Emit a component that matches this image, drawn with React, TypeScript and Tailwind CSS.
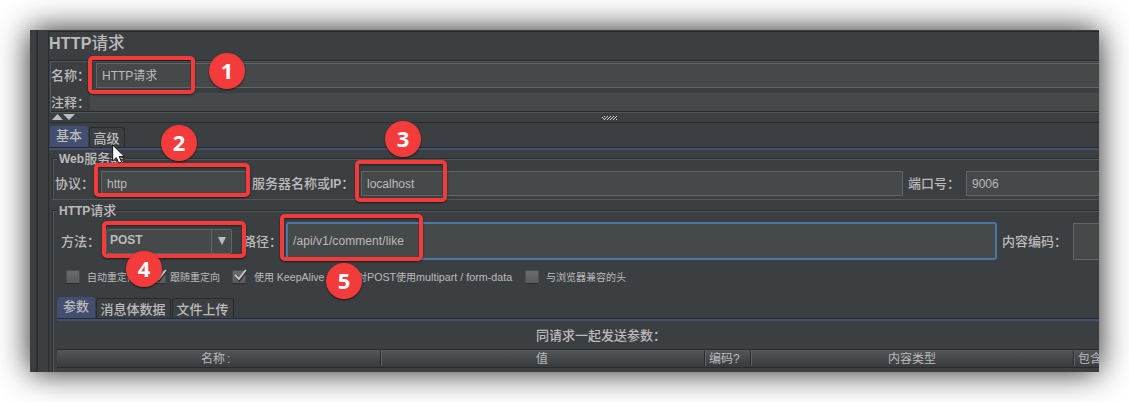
import type { ReactNode } from 'react';

const badges = [
  { n: 1, pos: 'left-[209px] top-[53px]' },
  { n: 2, pos: 'left-[161px] top-[125px]' },
  { n: 3, pos: 'left-[385px] top-[121px]' },
  { n: 4, pos: 'left-[126px] top-[251px]' },
  { n: 5, pos: 'left-[326px] top-[263px]' },
];

const frames = [
  'left-[88px] top-[56px] w-[107px] h-[38px]',
  'left-[94px] top-[163px] w-[156px] h-[34px]',
  'left-[355px] top-[160px] w-[92px] h-[42px]',
  'left-[102px] top-[221px] w-[144px] h-[37px]',
  'left-[280px] top-[214px] w-[143px] h-[47px]',
];

function Label({ children, className = '' }: { children: ReactNode; className?: string }) {
  return <span className={`shrink-0 text-[13px] font-medium leading-none ${className}`}>{children}</span>;
}

function Latin({ children }: { children: ReactNode }) {
  return <span className="text-[12px] font-bold">{children}</span>;
}

function Field({ children, className }: { children?: ReactNode; className: string }) {
  return (
    <div className={`flex shrink-0 items-center border border-[#646464] bg-[#45494a] text-[12px] leading-none ${className}`}>
      {children}
    </div>
  );
}

function Check({ on = false, className = '' }: { on?: boolean; className?: string }) {
  return (
    <span className={`flex h-[14px] w-[14px] shrink-0 rounded-[1px] border border-[#4b4c4d] border-b-[#2b2d2e] bg-linear-to-b from-[#6b6b6b] to-[#5b5b5b] ${className}`}>
      {on && (
        <svg viewBox="0 0 14 14" className="-mt-[2px] h-[14px] w-[14px] shrink-0 overflow-visible" fill="none">
          <path d="M2.8 6.8 L6.2 11 L13 2" stroke="#2a2a2a" strokeWidth="2.8" />
          <path d="M2 5.8 L5.8 10 L12.8 1" stroke="#c4c4c4" strokeWidth="2" />
        </svg>
      )}
    </span>
  );
}

function Group({ title, className, gap, children }: { title: ReactNode; className: string; gap: string; children: ReactNode }) {
  return (
    <section className={`relative ml-[3px] border-l border-t border-[#2b2d2f] ${className}`}>
      <div className="h-full border-l border-t border-[#55585a]">{children}</div>
      <div className={`absolute -top-[8px] left-[4px] flex h-[15px] items-center bg-[#3c3f41] pl-[2px] ${gap}`}>
        <Label>{title}</Label>
      </div>
    </section>
  );
}

function Tab({ active = false, children, className }: { active?: boolean; children: ReactNode; className: string }) {
  return (
    <div
      className={`flex shrink-0 items-center justify-center rounded-t-[3px] ${
        active ? 'bg-[#434f70] pb-[2px]' : 'border border-b-0 border-[#292b2d] bg-[#3c3f41] pr-px pt-px'
      } ${className}`}
    >
      <Label>{children}</Label>
    </div>
  );
}

function TabLine() {
  return <div className="h-[3px] shrink-0 border-t border-[#292b2d] bg-[#434f70]" />;
}

function HeadCell({ children, className }: { children: ReactNode; className: string }) {
  return (
    <div className="flex h-full items-center">
      <div className={`flex h-full items-center overflow-hidden whitespace-nowrap pt-px ${className}`}>{children}</div>
      <span className="h-[15px] w-[2px] border-l border-[#292b2d] bg-[#606365]" />
    </div>
  );
}

export default function App() {
  return (
    <div className="relative h-[402px] w-[1129px] overflow-hidden bg-white p-[30px] text-[#bbbbbb] [font-family:'Liberation_Sans','Noto_Sans_CJK_SC',sans-serif]">
      <div className="flex h-[342px] w-[1069px] overflow-hidden whitespace-nowrap bg-[#3c3f41] shadow-[0_0_30px_rgba(0,0,0,0.88)]">
        <div className="w-[6px] shrink-0" />
        <div className="w-[2px] shrink-0 bg-[#2b2d2f]" />
        <div className="w-[10px] shrink-0" />
        <main className="mt-px flex w-[1051px] shrink-0 flex-col border-l border-t border-[#292b2d]">
          <header className="flex h-[29px] shrink-0 items-center border-b border-[#292b2d] pb-[5px] text-[16px] leading-none">
            <span className="font-bold tracking-[0.2px]">HTTP</span>
            <span className="text-[16.5px] font-medium">请求</span>
          </header>

          <div className="ml-px h-[52px] shrink-0 border-b border-l border-t border-[#55585a]">
            <div className="flex h-[50px] flex-col border-b border-[#292b2d] pt-px">
              <div className="flex h-[25px] items-center">
                <Label className="w-[45px]">名称：</Label>
                <Field className="h-[25px] w-[1010px] pl-[5px]">HTTP请求</Field>
              </div>
              <div className="mt-[5px] flex h-[18px] items-center">
                <Label className="w-[39px]">注释：</Label>
                <div className="h-[18px] flex-1 bg-[#45494a]" />
              </div>
            </div>
          </div>

          <div className="flex h-[9px] shrink-0 items-start pl-[3px] pt-px">
            <svg width="24" height="6" viewBox="0 0 24 6" fill="#bbbbbb">
              <path d="M0 6 L5.5 0 L11 6Z M11 0 H23 L17 6Z" />
            </svg>
            <svg width="16" height="4" viewBox="0 0 16 4" className="ml-[526px] mt-[2px]" fill="#d8d8d8" shapeRendering="crispEdges">
              <path d="M2 0h1v1h-1zM5 0h1v1h-1zM8 0h1v1h-1zM11 0h1v1h-1zM14 0h1v1h-1z M0 1h1v1h-1zM4 1h1v1h-1zM7 1h1v1h-1zM10 1h1v1h-1zM13 1h1v1h-1z M1 2h1v1h-1zM3 2h1v1h-1zM6 2h1v1h-1zM9 2h1v1h-1zM12 2h1v1h-1z M2 3h1v1h-1zM5 3h1v1h-1zM8 3h1v1h-1zM11 3h1v1h-1zM14 3h1v1h-1z" />
            </svg>
          </div>

          <div className="flex h-[25px] shrink-0 items-end border-t border-[#292b2d] pl-px">
            <Tab active className="h-[21px] w-[38px]">基本</Tab>
            <Tab className="ml-px h-[20px] w-[36px]">高级</Tab>
          </div>
          <TabLine />

          <Group title={<><Latin>Web</Latin>服务器</>} gap="w-[68px]" className="mt-[8px] h-[41px] shrink-0">
            <div className="flex h-[36px] items-center pl-[1px] pt-[11px]">
              <Label className="w-[46px]">协议：</Label>
              <Field className="h-[25px] w-[147px] pl-[5px]">http</Field>
              <Label className="ml-[4px] w-[109px]">服务器名称或<Latin>IP</Latin>：</Label>
              <Field className="h-[25px] w-[542px] pl-[5px]">localhost</Field>
              <Label className="ml-[5px] w-[58px]">端口号：</Label>
              <Field className="h-[25px] w-[160px] pl-[5px]">9006</Field>
            </div>
          </Group>
          <div className="ml-[3px] h-px shrink-0 bg-[#55585a]" />

          <Group title={<><Latin>HTTP</Latin>请求</>} gap="w-[59px]" className="mt-[10px] min-h-0 flex-1">
            <div className="mt-[10px] flex h-[38px] items-center pl-[7px]">
              <Label className="w-[45px]">方法：</Label>
              <div className="flex h-[25px] w-[126px] shrink-0 items-center rounded-[2px] border border-[#646464] bg-[#45494a]">
                <span className="flex-1 pb-[2px] pl-[3px] text-[12px] font-bold leading-none">POST</span>
                <span className="flex h-full w-[20px] items-center justify-center border-l border-[#646464]">
                  <svg width="8" height="8" viewBox="0 0 8 8" fill="#bbbbbb"><path d="M0 0H8L4 8Z" /></svg>
                </span>
              </div>
              <Label className="ml-[11px] w-[43px]">路径：</Label>
              <div className="flex h-[38px] w-[711px] shrink-0 items-center rounded-[3px] border-2 border-[#4a78a6] bg-[#45494a] pl-[5px] text-[12px] tracking-[0.08px]">
                /api/v1/comment/like
              </div>
              <Label className="ml-[5px] w-[71px]">内容编码：</Label>
              <Field className="h-[37px] w-[60px]" />
            </div>

            <div className="mt-[10px] flex h-[14px] items-center pl-[12px] text-[10px] leading-none">
              <Check />
              <span className="ml-[7px] w-[65px] pt-[2px]">自动重定向</span>
              <Check on />
              <span className="ml-[4px] w-[62px] pt-[2px]">跟随重定向</span>
              <Check on />
              <span className="ml-[8px] w-[76px] pt-px">使用 <span className="text-[10.6px]">KeepAlive</span></span>
              <Check />
              <span className="ml-[13px] w-[168px] pt-px">对<span className="text-[10.7px]">POST</span>使用<span className="text-[10.75px]">multipart / form-data</span></span>
              <Check />
              <span className="ml-[7px] pt-[2px]">与浏览器兼容的头</span>
            </div>

            <div className="ml-[3px] mt-[13px]">
              <div className="flex h-[21px] items-end">
                <Tab active className="h-[21px] w-[38px]">参数</Tab>
                <Tab className="ml-px h-[20px] w-[75px]">消息体数据</Tab>
                <Tab className="ml-px h-[20px] w-[62px]">文件上传</Tab>
              </div>
              <TabLine />
              <div className="flex h-[28px] items-center pl-[479px]">
                <Label>同请求一起发送参数：</Label>
              </div>
              <div className="flex h-[19px] items-center border-y border-[#292b2d] bg-linear-to-b from-[#525658] to-[#393c3e] text-[12px] leading-none">
                <HeadCell className="w-[323px] pl-[144px]">名称<span className="pl-[2px]">:</span></HeadCell>
                <HeadCell className="w-[322px] pl-[154px]">值</HeadCell>
                <HeadCell className="w-[44px] pl-[3px]">编码?</HeadCell>
                <HeadCell className="w-[321px] pl-[136px]">内容类型</HeadCell>
                <span className="pl-[3px] pt-px">包含</span>
              </div>
            </div>
          </Group>
        </main>
      </div>

      {frames.map((f) => (
        <div key={f} className={`absolute rounded-[5px] border-4 border-[#f43b3b] shadow-[0_1px_2px_rgba(0,0,0,0.6),inset_0_1px_2px_rgba(0,0,0,0.5)] ${f}`} />
      ))}
      <svg className="absolute left-[112px] top-[144px]" width="14" height="21" viewBox="0 0 14 21">
        <path d="M.7 1 V17 L4.3 13.6 L6.8 19.2 L9.6 18 L7.2 12.6 H12.3Z" fill="#fff" stroke="#111" strokeWidth="1" />
      </svg>
      {badges.map((b) => (
        <div
          key={b.n}
          className={`absolute flex h-[36px] w-[36px] items-center justify-center rounded-full bg-[#f43b3b] pb-[2px] text-[22px] font-bold leading-none text-white shadow-[0_1px_2px_rgba(0,0,0,0.6)] [font-family:'Open_Sans',sans-serif] ${b.pos}`}
        >
          {b.n}
        </div>
      ))}
    </div>
  );
}
